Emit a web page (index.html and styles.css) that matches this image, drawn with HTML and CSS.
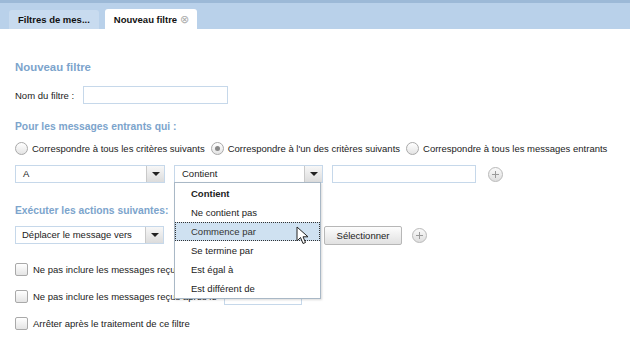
FILE: index.html
```html
<!DOCTYPE html>
<html lang="fr">
<head>
  <meta charset="UTF-8">
  <title>Nouveau filtre</title>
  <link rel="stylesheet" href="styles.css">
</head>
<body>

<div class="onglets">
  <div class="onglet">Filtres de mes...</div>
  <div class="onglet actif">Nouveau filtre <span class="fermer">&#x2297;</span></div>
</div>

<div class="contenu">
  <h3 class="titre titre-premier">Nouveau filtre</h3>

  <div class="ligne ligne-nom">
    <label>Nom du filtre :</label>
    <input type="text" class="champ champ-nom">
  </div>

  <h3 class="titre">Pour les messages entrants qui :</h3>

  <div class="ligne ligne-radios">
    <span class="radio"></span><span class="lib">Correspondre à tous les critères suivants</span>
    <span class="radio coche"></span><span class="lib">Correspondre à l'un des critères suivants</span>
    <span class="radio"></span><span class="lib">Correspondre à tous les messages entrants</span>
  </div>

  <div class="ligne ligne-critere">
    <div class="liste liste-a"><span class="valeur">A</span><span class="fleche"></span></div>
    <div class="liste liste-op">
      <span class="valeur">Contient</span><span class="fleche"></span>
      <ul class="deroulant">
        <li class="gras">Contient</li>
        <li>Ne contient pas</li>
        <li class="survol">Commence par
          <!-- pointeur de souris -->
          <svg class="curseur" width="13" height="19" viewBox="0 0 13 19">
            <path d="M1 1 L1 15 L4.5 11.5 L7 17.5 L9.5 16.5 L7 10.8 L12 10.8 Z" fill="#fff" stroke="#222" stroke-width="1"/>
          </svg>
        </li>
        <li>Se termine par</li>
        <li>Est égal à</li>
        <li>Est différent de</li>
      </ul>
    </div>
    <input type="text" class="champ champ-valeur">
    <span class="plus"></span>
  </div>

  <h3 class="titre titre-actions">Exécuter les actions suivantes:</h3>

  <div class="ligne ligne-action">
    <div class="liste liste-action"><span class="valeur">Déplacer le message vers</span><span class="fleche"></span></div>
    <button class="bouton">Sélectionner</button>
    <span class="plus"></span>
  </div>

  <div class="ligne ligne-case">
    <span class="case"></span><span class="lib">Ne pas inclure les messages reçus avant le</span>
    <input type="text" class="champ champ-date">
  </div>
  <div class="ligne ligne-case">
    <span class="case"></span><span class="lib">Ne pas inclure les messages reçus après le</span>
    <input type="text" class="champ champ-date">
  </div>
  <div class="ligne ligne-case">
    <span class="case"></span><span class="lib">Arrêter après le traitement de ce filtre</span>
  </div>
</div>

</body>
</html>
```

FILE: styles.css
```css
/* Page de création de filtre */
body {
  margin: 0;
  font-family: "Liberation Sans", Arial, sans-serif;
  font-size: 9.5px;
  color: #222;
  background: #fff;
}
.onglets {
  height: 26px;
  border-top: 3px solid #9cb9d7;
  background: #b9d1ea;
  display: flex;
  align-items: flex-end;
  padding-left: 9px;
  gap: 6px;
}
.onglet {
  height: 19px;
  line-height: 19px;
  padding: 0 9px;
  background: #c8dbef;
  border-radius: 3px 3px 0 0;
  font-weight: bold;
  color: #111;
}
.onglet.actif {
  background: #fff;
  height: 20px;
  line-height: 20px;
  padding: 0 8px 0 9px;
}
.fermer {
  font-weight: normal;
  color: #aaa;
  font-size: 11px;
}
.contenu {
  padding-left: 15px;
}
.titre {
  margin: 0;
  font-size: 10.3px;
  font-weight: bold;
  color: #7ca4cc;
  height: 14px;
  line-height: 14px;
  margin-top: 16px;
}
.titre-premier {
  font-size: 11.4px;
  margin-top: 31px;
}
.titre-actions {
  margin-top: 21px;
}
.ligne {
  display: flex;
  align-items: center;
}
.ligne-nom {
  margin-top: 12px;
  gap: 9px;
  height: 18px;
}
.champ {
  box-sizing: border-box;
  height: 18px;
  border: 1px solid #c6d8ea;
  margin: 0;
  padding: 0 3px;
  background: #fff;
}
.champ-nom {
  width: 145px;
}
.ligne-radios {
  margin-top: 7px;
  height: 14px;
}
.radio {
  width: 11px;
  height: 11px;
  border: 1px solid #a9a9a9;
  border-radius: 50%;
  background: linear-gradient(#fff, #e4e4e4);
  position: relative;
  flex-shrink: 0;
}
.radio.coche::after {
  content: "";
  position: absolute;
  left: 3px;
  top: 3px;
  width: 5px;
  height: 5px;
  border-radius: 50%;
  background: #888;
}
.ligne-radios .lib {
  margin: 0 6px 0 4px;
}
.ligne-critere {
  margin-top: 10px;
  height: 18px;
  gap: 9px;
}
.liste {
  box-sizing: border-box;
  height: 18px;
  border: 1px solid #c6d8ea;
  display: flex;
  align-items: stretch;
  position: relative;
  background: #fff;
}
.liste .valeur {
  flex: 1;
  line-height: 16px;
  padding-left: 7px;
}
.fleche {
  width: 17px;
  border-left: 1px solid #c9c9c9;
  background: linear-gradient(#f7f7f7, #dcdcdc);
  position: relative;
}
.fleche::after {
  content: "";
  position: absolute;
  left: 5px;
  top: 6px;
  border-left: 4px solid transparent;
  border-right: 4px solid transparent;
  border-top: 4px solid #222;
}
.liste-a {
  width: 150px;
}
.liste-op {
  width: 149px;
}
.champ-valeur {
  width: 144px;
}
.plus {
  width: 13px;
  height: 13px;
  border: 1px solid #b9b9b9;
  border-radius: 50%;
  background: linear-gradient(#fafafa, #dedede);
  position: relative;
  margin-left: 3px;
}
.plus::before,
.plus::after {
  content: "";
  position: absolute;
  background: #9a9a9a;
}
.plus::before {
  left: 3px;
  top: 6px;
  width: 7px;
  height: 1px;
}
.plus::after {
  left: 6px;
  top: 3px;
  width: 1px;
  height: 7px;
}
.deroulant {
  position: absolute;
  top: 16px;
  left: -1px;
  width: 145px;
  margin: 0;
  padding: 0;
  list-style: none;
  background: #fff;
  border: 1px solid #a9b8c6;
  box-shadow: 1px 1px 2px rgba(0, 0, 0, 0.15);
  z-index: 2;
}
.deroulant li {
  height: 19px;
  line-height: 19px;
  padding-left: 16px;
  position: relative;
}
.deroulant li:first-child {
  margin-top: 1px;
}
.deroulant .gras {
  font-weight: bold;
}
.deroulant .survol {
  background: #cfe1f1;
  outline: 1px dotted #333;
  outline-offset: -1px;
  color: #333;
}
.curseur {
  position: absolute;
  left: 121px;
  top: 4px;
}
.ligne-action {
  margin-top: 7px;
  height: 20px;
}
.liste-action {
  width: 149px;
}
.liste-action .valeur {
  padding-left: 6px;
}
.bouton {
  margin-left: 160px;
  box-sizing: border-box;
  width: 78px;
  height: 19px;
  border: 1px solid #b7b7b7;
  border-radius: 2px;
  background: linear-gradient(#fdfdfd, #e1e1e1);
  font-family: "Liberation Sans", Arial, sans-serif;
  font-size: 9.5px;
  color: #222;
  padding: 0;
}
.ligne-action .plus {
  margin-left: 10px;
}
.ligne-case {
  height: 18px;
  margin-top: 9px;
}
.ligne-action + .ligne-case {
  margin-top: 15px;
}
.case {
  width: 11px;
  height: 11px;
  border: 1px solid #a9a9a9;
  border-radius: 2px;
  background: linear-gradient(#fff, #e4e4e4);
  flex-shrink: 0;
}
.ligne-case .lib {
  margin-left: 5px;
}
.champ-date {
  width: 78px;
  margin-left: 7px;
}
```
